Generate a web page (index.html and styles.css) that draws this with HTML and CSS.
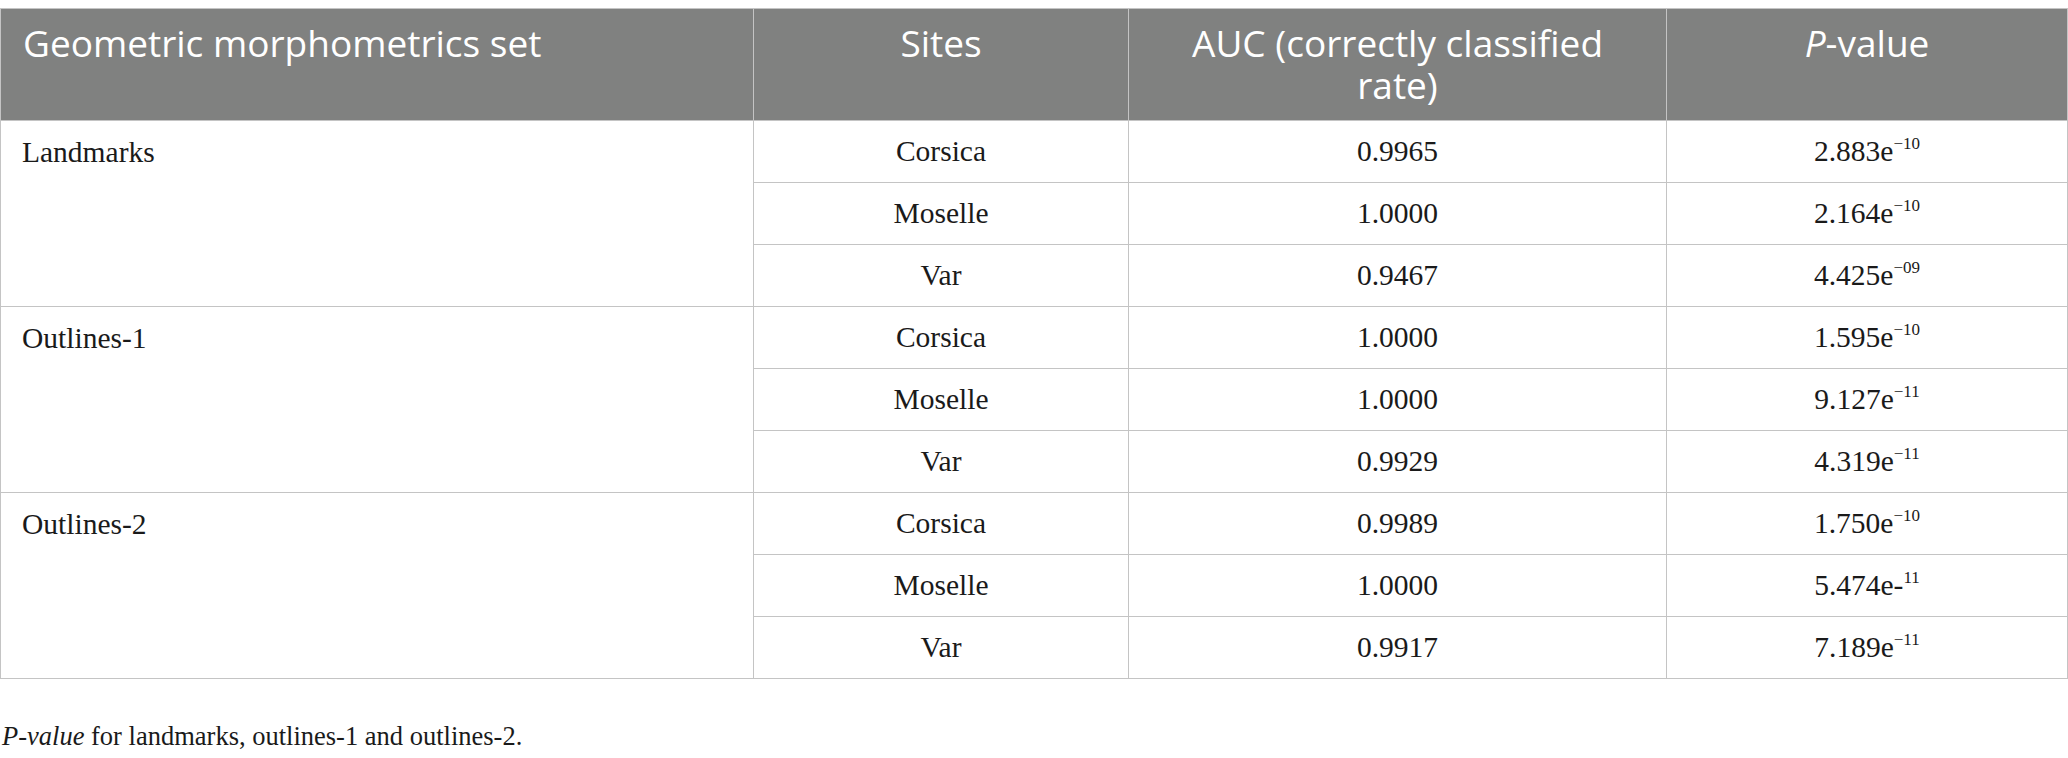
FILE: index.html
```html
<!DOCTYPE html>
<html>
<head>
<meta charset="utf-8">
<link rel="stylesheet" href="styles.css">
</head>
<body>
<div class="wrap">
<table class="data">
  <colgroup>
    <col class="c1"><col class="c2"><col class="c3"><col class="c4">
  </colgroup>
  <thead>
    <tr>
      <th class="left">Geometric morphometrics set</th>
      <th>Sites</th>
      <th>AUC (correctly classified rate)</th>
      <th><i>P</i>-value</th>
    </tr>
  </thead>
  <tbody>
    <tr>
      <td class="group" rowspan="3">Landmarks</td>
      <td>Corsica</td><td>0.9965</td><td>2.883e<sup>−10</sup></td>
    </tr>
    <tr><td>Moselle</td><td>1.0000</td><td>2.164e<sup>−10</sup></td></tr>
    <tr><td>Var</td><td>0.9467</td><td>4.425e<sup>−09</sup></td></tr>
    <tr>
      <td class="group" rowspan="3">Outlines-1</td>
      <td>Corsica</td><td>1.0000</td><td>1.595e<sup>−10</sup></td>
    </tr>
    <tr><td>Moselle</td><td>1.0000</td><td>9.127e<sup>−11</sup></td></tr>
    <tr><td>Var</td><td>0.9929</td><td>4.319e<sup>−11</sup></td></tr>
    <tr>
      <td class="group" rowspan="3">Outlines-2</td>
      <td>Corsica</td><td>0.9989</td><td>1.750e<sup>−10</sup></td>
    </tr>
    <tr><td>Moselle</td><td>1.0000</td><td>5.474e-<sup>11</sup></td></tr>
    <tr><td>Var</td><td>0.9917</td><td>7.189e<sup>−11</sup></td></tr>
  </tbody>
</table>
<p class="note"><i>P-value</i> for landmarks, outlines-1 and outlines-2.</p>
</div>
</body>
</html>
```
FILE: styles.css
```css
html, body {
  margin: 0;
  padding: 0;
  background: #ffffff;
}
.wrap {
  padding-top: 8px;
}
.data {
  width: 2068px;
  border-collapse: collapse;
  table-layout: fixed;
  font-family: "Liberation Serif", "Times New Roman", serif;
  color: #1a1a1a;
}
.c1 { width: 753px; }
.c2 { width: 375px; }
.c3 { width: 538px; }
.c4 { width: 401px; }
.data th {
  background: #808180;
  color: #ffffff;
  font-family: "Open Sans", "Noto Sans", sans-serif;
  font-weight: 400;
  font-size: 37px;
  line-height: 42px;
  text-align: center;
  vertical-align: top;
  height: 112px;
  box-sizing: border-box;
  padding: 13px 22px 0 22px;
  border: 1px solid #c4c4c4;
}
.data th.left {
  text-align: left;
}
.data td {
  font-size: 29.5px;
  text-align: center;
  vertical-align: middle;
  height: 62px;
  box-sizing: border-box;
  padding: 0 10px;
  border: 1px solid #c4c4c4;
}
.data td.group {
  text-align: left;
  vertical-align: top;
  padding: 14px 21px 0 21px;
  line-height: 34px;
}
.data sup {
  font-size: 17px;
  line-height: 0;
  vertical-align: 12px;
}
.note {
  margin: 42px 0 0 2px;
  font-family: "Liberation Serif", "Times New Roman", serif;
  font-size: 26.5px;
  color: #1a1a1a;
}
```
